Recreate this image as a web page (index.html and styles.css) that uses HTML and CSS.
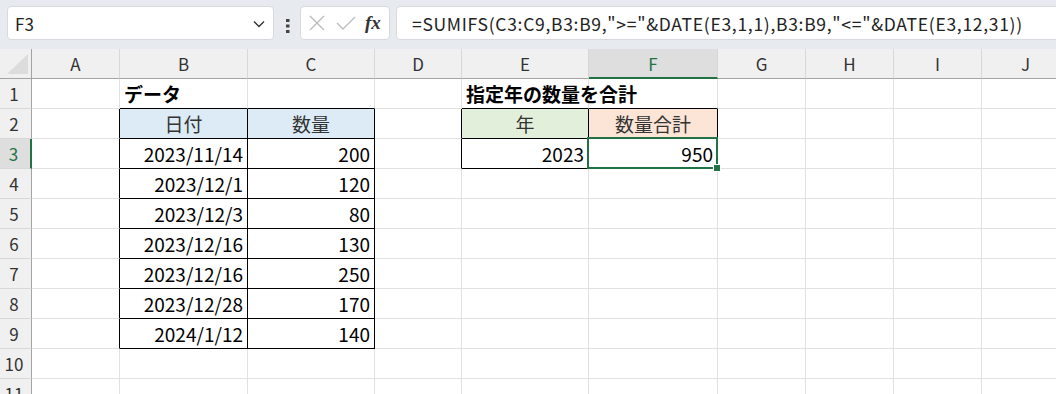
FILE: index.html
```html
<!DOCTYPE html>
<html lang="ja">
<head>
    <meta charset="UTF-8">
    <title>SUMIFS</title>
    <link rel="stylesheet" href="styles.css">
</head>
<body>
    <div class="toolbar">
        <div class="namebox">
            <span>F3</span>
            <svg class="chev" width="12" height="8" viewBox="0 0 12 8"><path d="M1 1.5 L6 6.5 L11 1.5" fill="none" stroke="#333" stroke-width="1.4"/></svg>
        </div>
        <svg class="dots" width="4" height="14" viewBox="0 0 4 14"><rect x="0" y="0" width="3.5" height="3" fill="#444"/><rect x="0" y="5.5" width="3.5" height="3" fill="#444"/><rect x="0" y="11" width="3.5" height="3" fill="#444"/></svg>
        <div class="fxbox">
            <svg width="16" height="16" viewBox="0 0 16 16"><path d="M1 1 L15 15 M15 1 L1 15" stroke="#bcbcbc" stroke-width="1.4"/></svg>
            <svg width="20" height="16" viewBox="0 0 20 16"><path d="M1 8 L7 14 L19 2" fill="none" stroke="#bcbcbc" stroke-width="1.4"/></svg>
            <span class="fx">fx</span>
        </div>
        <div class="formula">=SUMIFS(C3:C9,B3:B9,"&gt;="&amp;DATE(E3,1,1),B3:B9,"&lt;="&amp;DATE(E3,12,31))</div>
    </div>

    <div class="sheet">
        <!-- column headers -->
        <div class="c corner"><span class="tri"></span></div>
        <div class="c ch">A</div>
        <div class="c ch">B</div>
        <div class="c ch">C</div>
        <div class="c ch">D</div>
        <div class="c ch">E</div>
        <div class="c ch on">F</div>
        <div class="c ch">G</div>
        <div class="c ch">H</div>
        <div class="c ch">I</div>
        <div class="c ch">J</div>

        <!-- row 1 -->
        <div class="c rh">1</div>
        <div class="c"></div>
        <div class="c bb title">データ</div>
        <div class="c bb"></div>
        <div class="c"></div>
        <div class="c bb title">指定年の数量を合計</div>
        <div class="c bb"></div>
        <div class="c"></div>
        <div class="c"></div>
        <div class="c"></div>
        <div class="c"></div>

        <!-- row 2 -->
        <div class="c rh">2</div>
        <div class="c br"></div>
        <div class="c br bb ctr blue">日付</div>
        <div class="c br bb ctr blue">数量</div>
        <div class="c br"></div>
        <div class="c br bb ctr green">年</div>
        <div class="c br bb ctr peach">数量合計</div>
        <div class="c"></div>
        <div class="c"></div>
        <div class="c"></div>
        <div class="c"></div>

        <!-- row 3 -->
        <div class="c rh on">3</div>
        <div class="c br"></div>
        <div class="c br bb num">2023/11/14</div>
        <div class="c br bb num">200</div>
        <div class="c br"></div>
        <div class="c br bb num">2023</div>
        <div class="c br bb num sel">950<span class="handle"></span></div>
        <div class="c"></div>
        <div class="c"></div>
        <div class="c"></div>
        <div class="c"></div>

        <!-- row 4 -->
        <div class="c rh">4</div>
        <div class="c br"></div>
        <div class="c br bb num">2023/12/1</div>
        <div class="c br bb num">120</div>
        <div class="c"></div>
        <div class="c"></div>
        <div class="c"></div>
        <div class="c"></div>
        <div class="c"></div>
        <div class="c"></div>
        <div class="c"></div>

        <!-- row 5 -->
        <div class="c rh">5</div>
        <div class="c br"></div>
        <div class="c br bb num">2023/12/3</div>
        <div class="c br bb num">80</div>
        <div class="c"></div>
        <div class="c"></div>
        <div class="c"></div>
        <div class="c"></div>
        <div class="c"></div>
        <div class="c"></div>
        <div class="c"></div>

        <!-- row 6 -->
        <div class="c rh">6</div>
        <div class="c br"></div>
        <div class="c br bb num">2023/12/16</div>
        <div class="c br bb num">130</div>
        <div class="c"></div>
        <div class="c"></div>
        <div class="c"></div>
        <div class="c"></div>
        <div class="c"></div>
        <div class="c"></div>
        <div class="c"></div>

        <!-- row 7 -->
        <div class="c rh">7</div>
        <div class="c br"></div>
        <div class="c br bb num">2023/12/16</div>
        <div class="c br bb num">250</div>
        <div class="c"></div>
        <div class="c"></div>
        <div class="c"></div>
        <div class="c"></div>
        <div class="c"></div>
        <div class="c"></div>
        <div class="c"></div>

        <!-- row 8 -->
        <div class="c rh">8</div>
        <div class="c br"></div>
        <div class="c br bb num">2023/12/28</div>
        <div class="c br bb num">170</div>
        <div class="c"></div>
        <div class="c"></div>
        <div class="c"></div>
        <div class="c"></div>
        <div class="c"></div>
        <div class="c"></div>
        <div class="c"></div>

        <!-- row 9 -->
        <div class="c rh">9</div>
        <div class="c br"></div>
        <div class="c br bb num">2024/1/12</div>
        <div class="c br bb num">140</div>
        <div class="c"></div>
        <div class="c"></div>
        <div class="c"></div>
        <div class="c"></div>
        <div class="c"></div>
        <div class="c"></div>
        <div class="c"></div>

        <!-- row 10 -->
        <div class="c rh">10</div>
        <div class="c"></div>
        <div class="c"></div>
        <div class="c"></div>
        <div class="c"></div>
        <div class="c"></div>
        <div class="c"></div>
        <div class="c"></div>
        <div class="c"></div>
        <div class="c"></div>
        <div class="c"></div>

        <!-- row 11 -->
        <div class="c rh">11</div>
        <div class="c"></div>
        <div class="c"></div>
        <div class="c"></div>
        <div class="c"></div>
        <div class="c"></div>
        <div class="c"></div>
        <div class="c"></div>
        <div class="c"></div>
        <div class="c"></div>
        <div class="c"></div>
    </div>
</body>
</html>
```

FILE: styles.css
```css
body {
    margin: 0;
    padding: 0;
    width: 1056px;
    height: 394px;
    overflow: hidden;
    background-color: white;
    font-family: "Noto Sans CJK JP", "Noto Sans", sans-serif;
    color: black;
}

/* formula bar */
.toolbar {
    height: 49px;
    background-color: #e7eaef;
    display: flex;
    align-items: flex-start;
    padding: 6px 0 0 7px;
    box-sizing: border-box;
}

.namebox {
    width: 267px;
    height: 34px;
    box-sizing: border-box;
    background: white;
    border: 1px solid #d6d9de;
    border-radius: 4px;
    display: flex;
    align-items: center;
    justify-content: space-between;
    padding: 0 8px 0 7px;
    font-size: 17px;
    color: #222;
}

.chev {
    margin-top: 1px;
}

.dots {
    margin: 13px 10px 0 12px;
}

.fxbox {
    width: 90px;
    height: 34px;
    box-sizing: border-box;
    background: white;
    border: 1px solid #d6d9de;
    border-radius: 4px;
    display: flex;
    align-items: center;
    gap: 11px;
    padding-left: 8px;
}

.fx {
    font-family: "Liberation Serif", serif;
    font-style: italic;
    font-weight: bold;
    font-size: 19px;
    color: #333;
    margin-left: -2px;
}

.formula {
    flex: 1;
    height: 34px;
    box-sizing: border-box;
    margin-left: 6px;
    margin-right: -12px;
    background: white;
    border: 1px solid #d6d9de;
    border-radius: 4px;
    display: flex;
    align-items: center;
    padding-left: 15px;
    font-size: 17.5px;
    letter-spacing: 0.7px;
    color: #222;
    white-space: nowrap;
}

/* grid */
.sheet {
    display: grid;
    grid-template-columns: 32px 88px 128px 127px 87px 127px 129px 88px 88px 88px 88px;
    grid-template-rows: 30px repeat(11, 30px);
    font-size: 19px;
}

.c {
    box-sizing: border-box;
    border-right: 1px solid #e1e1e1;
    border-bottom: 1px solid #e1e1e1;
    display: flex;
    align-items: center;
    padding: 0 4px;
    white-space: nowrap;
    overflow: visible;
    position: relative;
}

.corner {
    background: #f0f0f0;
    border-right: 1px solid #a3a3a3;
    border-bottom: 1px solid #a3a3a3;
}

.tri {
    position: absolute;
    right: 3px;
    bottom: 4px;
    width: 0;
    height: 0;
    border-left: 21px solid transparent;
    border-bottom: 20px solid #dcdcdc;
}

.ch {
    background: #f0f0f0;
    justify-content: center;
    border-right-color: #d8d8d8;
    border-bottom: 1px solid #a3a3a3;
    font-size: 17px;
    color: #333;
}

.ch.on {
    background: #dedede;
    color: #217346;
    border-bottom: 2px solid #217346;
}

.rh {
    background: #f0f0f0;
    justify-content: center;
    padding: 0 3px 0 0;
    border-right: 1px solid #a3a3a3;
    border-bottom-color: #d8d8d8;
    font-size: 17px;
    color: #333;
}

.rh.on {
    background: #dedede;
    color: #217346;
    border-right: 2px solid #217346;
}

.title {
    font-weight: bold;
    overflow: visible;
}

.num {
    justify-content: flex-end;
}

.ctr {
    justify-content: center;
    color: #333;
}

.br {
    border-right-color: black;
}

.bb {
    border-bottom-color: black;
}

.blue {
    background: #ddebf7;
}

.green {
    background: #e2efda;
}

.peach {
    background: #fce4d6;
}

.sel::after {
    content: "";
    position: absolute;
    left: -2px;
    top: -2px;
    right: -1px;
    bottom: -1px;
    border: 2px solid #217346;
}

.handle {
    position: absolute;
    right: -4px;
    bottom: -4px;
    width: 6px;
    height: 6px;
    background: #217346;
    border: 1px solid white;
    z-index: 2;
}
```
